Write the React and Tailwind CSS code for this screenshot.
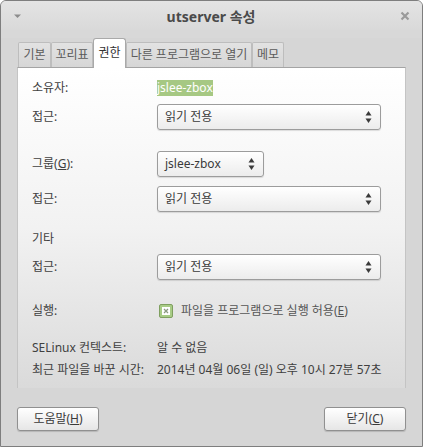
import React from "react";

const font = { fontFamily: '"Noto Sans", "Noto Sans CJK KR", sans-serif' };

function Arrows() {
  return (
    <svg width="7" height="14" viewBox="0 0 7 14" className="shrink-0">
      <path d="M3.5 1 L6.5 5.5 L0.5 5.5 Z" fill="#3a3a3a" />
      <path d="M3.5 13 L6.5 8.5 L0.5 8.5 Z" fill="#3a3a3a" />
    </svg>
  );
}

function Combo({ value, wide = true }) {
  return (
    <div
      className={`${
        wide ? "w-[224px]" : "w-[107px]"
      } h-[26px] flex items-center justify-between pl-[7px] pr-[8px] rounded-[3px] border border-[#9c9c9c] bg-gradient-to-b from-white to-[#ececec] shadow-[0_1px_1px_rgba(0,0,0,0.12)] text-[#3a3a3a]`}
    >
      <span>{value}</span>
      <Arrows />
    </div>
  );
}

function Row({ label, children, className = "" }) {
  return (
    <div className={`flex items-center ${className}`}>
      <div className="w-[125px] shrink-0 text-[#404040]">{label}</div>
      {children}
    </div>
  );
}

const tabs = [
  { name: "기본", w: "w-[33px]" },
  { name: "꼬리표", w: "w-[42px]" },
  { name: "권한", w: "w-[33px]", active: true },
  { name: "다른 프로그램으로 열기", w: "w-[126px]" },
  { name: "메모", w: "w-[32px]" },
];

export default function App() {
  return (
    <div
      className="w-[423px] h-[447px] flex flex-col border border-[#7e7e7e] rounded-t-[6px] bg-[#d6d6d6] text-[12px] overflow-hidden"
      style={font}
    >
      {/* title bar */}
      <div className="h-[29px] shrink-0 flex items-center justify-between px-[12px] bg-gradient-to-b from-[#e4e4e4] to-[#d9d9d9]">
        <svg width="9" height="6" viewBox="0 0 9 6">
          <path d="M1 1.5 L8 1.5 L4.5 5 Z" fill="#8c8c8c" />
        </svg>
        <div className="text-[14px] font-bold text-[#4a4a4a] pt-[1px]">
          utserver 속성
        </div>
        <svg width="10" height="10" viewBox="0 0 10 10">
          <path
            d="M1.5 1.5 L8.5 8.5 M8.5 1.5 L1.5 8.5"
            stroke="#9a9a9a"
            strokeWidth="2.2"
          />
        </svg>
      </div>

      <div className="h-[8px] shrink-0 bg-[#d8d8d8]" />

      {/* tabs */}
      <div className="h-[29px] shrink-0 flex items-end pl-[17px] relative z-10">
        {tabs.map((t) =>
          t.active ? (
            <div
              key={t.name}
              className={`${t.w} h-[30px] -mb-px flex items-center justify-center bg-white border border-b-0 border-[#a9a9a9] rounded-t-[3px] text-[#333] pb-[2px]`}
            >
              {t.name}
            </div>
          ) : (
            <div
              key={t.name}
              className={`${t.w} h-[25px] flex items-center justify-center bg-gradient-to-b from-[#e2e2e2] to-[#d6d6d6] border border-b-0 border-[#bdbdbd] rounded-t-[2px] text-[#5a5a5a]`}
            >
              {t.name}
            </div>
          )
        )}
      </div>

      {/* notebook page */}
      <div className="mx-[16px] h-[321px] shrink-0 border-t border-x border-t-[#a4a4a4] border-x-[#c4c4c4] bg-gradient-to-b from-white via-[#f2f2f2] to-[#dadada] pl-[14px] flex flex-col">
        <Row label="소유자:" className="mt-[12px] h-[16px]">
          <span className="bg-[#a6c883] text-white leading-[16px]">
            jslee-zbox
          </span>
        </Row>
        <Row label="접근:" className="mt-[8px]">
          <Combo value="읽기 전용" />
        </Row>
        <Row
          label={
            <span>
              그룹(<span className="underline">G</span>):
            </span>
          }
          className="mt-[21px]"
        >
          <Combo value="jslee-zbox" wide={false} />
        </Row>
        <Row label="접근:" className="mt-[9px]">
          <Combo value="읽기 전용" />
        </Row>
        <div className="mt-[19px] h-[16px] flex items-center text-[#404040]">
          기타
        </div>
        <Row label="접근:" className="mt-[7px]">
          <Combo value="읽기 전용" />
        </Row>
        <Row label="실행:" className="mt-[23px] h-[16px]">
          <div className="ml-[2px] w-[14px] h-[14px] rounded-[2px] border border-[#7f9f60] bg-[#a8cc86] flex items-center justify-center">
            <div className="w-[8px] h-[8px] bg-white flex items-center justify-center">
              <svg width="6" height="6" viewBox="0 0 6 6">
                <path
                  d="M1 1 L5 5 M5 1 L1 5"
                  stroke="#8a9a80"
                  strokeWidth="1.3"
                />
              </svg>
            </div>
          </div>
          <span className="ml-[8px] text-[#555]">
            파일을 프로그램으로 실행 허용(<span className="underline">E</span>)
          </span>
        </Row>
        <Row label="SELinux 컨텍스트:" className="mt-[21px] h-[16px]">
          <span className="text-[#404040]">알 수 없음</span>
        </Row>
        <Row label="최근 파일을 바꾼 시간:" className="mt-[6px] h-[16px]">
          <span className="text-[#404040] whitespace-nowrap">
            2014년 04월 06일 (일) 오후 10시 27분 57초
          </span>
        </Row>
      </div>

      {/* buttons */}
      <div className="mt-[19px] mx-[16px] flex justify-between">
        <button className="w-[82px] h-[24px] rounded-[3px] border border-[#909090] bg-gradient-to-b from-white to-[#e6e6e6] shadow-[0_1px_1px_rgba(0,0,0,0.15)] text-[#3a3a3a]">
          도움말(<span className="underline">H</span>)
        </button>
        <button className="w-[82px] h-[24px] rounded-[3px] border border-[#909090] bg-gradient-to-b from-white to-[#e6e6e6] shadow-[0_1px_1px_rgba(0,0,0,0.15)] text-[#3a3a3a]">
          닫기(<span className="underline">C</span>)
        </button>
      </div>
    </div>
  );
}
